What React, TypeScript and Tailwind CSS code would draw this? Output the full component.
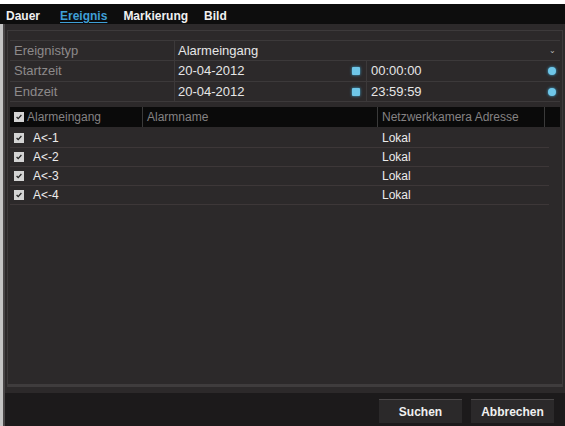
import React from 'react';

const CheckBox = () => (
  <span className="w-[10px] h-[10px] bg-[#d4d4d4] flex items-center justify-center shrink-0">
    <svg viewBox="0 0 10 10" className="w-[8px] h-[8px]">
      <path d="M2 5 L4 7 L8 2.5" stroke="#222" strokeWidth="1.6" fill="none" />
    </svg>
  </span>
);

const BlueDot = ({ round }: { round?: boolean }) => (
  <span
    className={`w-[8px] h-[8px] bg-[#6fc6e8] shadow-[0_0_3px_#3fa9d6] ${round ? 'rounded-full' : 'rounded-[1px]'}`}
  />
);

const App = () => {
  const tabs = [
    { name: 'Dauer', cls: 'ml-[6px]' },
    { name: 'Ereignis', cls: 'ml-[20px]' },
    { name: 'Markierung', cls: 'ml-[16px]' },
    { name: 'Bild', cls: 'ml-[16px]' },
  ];
  const alarms = ['A<-1', 'A<-2', 'A<-3', 'A<-4'];

  return (
    <div
      className="w-[565px] h-[426px] bg-white pt-[4px] flex flex-col text-[13px] overflow-hidden"
      style={{ fontFamily: '"Liberation Sans", Arial, sans-serif' }}
    >
      {/* Tabs */}
      <div className="h-[20px] bg-[#0d0d0d] flex items-center pt-[3px] shrink-0 text-[12px] font-bold">
        {tabs.map((t) => (
          <span
            key={t.name}
            className={`${t.cls} ${
              t.name === 'Ereignis'
                ? 'text-[#3f9fd6] underline underline-offset-2'
                : 'text-[#f0f0f0]'
            }`}
          >
            {t.name}
          </span>
        ))}
      </div>

      <div className="flex flex-1 min-h-0">
        <div className="w-[3px] bg-[#c4c4c4] shrink-0" />
        <div className="w-[2px] bg-[#4a4748] shrink-0" />
        <div className="flex-1 flex flex-col bg-[#2c292a]">
          {/* Panel */}
          <div className="flex-1 mt-[6px] mx-[2px] mb-[6px] border border-[#3d3a3b] border-b-[3px] border-b-[#3f3c3d] flex flex-col pt-[9px] px-[2px]">
            {/* Form */}
            <div className="flex flex-col text-[#8d8a8b]">
              <div className="flex h-[21px] border-t border-b border-[#3c393a]">
                <div className="w-[165px] pl-[4px] flex items-center border-r border-[#3c393a]">Ereignistyp</div>
                <div className="flex-1 pl-[3px] pr-[4px] flex items-center justify-between text-[#e6e6e6]">
                  <span>Alarmeingang</span>
                  <span className="text-[#bbb] text-[8px]">⌄</span>
                </div>
              </div>
              <div className="flex h-[21px] border-b border-[#3c393a]">
                <div className="w-[165px] pl-[4px] flex items-center border-r border-[#3c393a]">Startzeit</div>
                <div className="w-[192px] pl-[3px] pr-[6px] flex items-center justify-between text-[#e6e6e6] border-r border-[#3c393a]">
                  <span>20-04-2012</span>
                  <BlueDot />
                </div>
                <div className="flex-1 pl-[4px] pr-[4px] flex items-center justify-between text-[#e6e6e6]">
                  <span>00:00:00</span>
                  <BlueDot round />
                </div>
              </div>
              <div className="flex h-[20px] border-b border-[#3c393a]">
                <div className="w-[165px] pl-[4px] flex items-center border-r border-[#3c393a]">Endzeit</div>
                <div className="w-[192px] pl-[3px] pr-[6px] flex items-center justify-between text-[#e6e6e6] border-r border-[#3c393a]">
                  <span>20-04-2012</span>
                  <BlueDot />
                </div>
                <div className="flex-1 pl-[4px] pr-[4px] flex items-center justify-between text-[#e6e6e6]">
                  <span>23:59:59</span>
                  <BlueDot round />
                </div>
              </div>
            </div>

            {/* Table */}
            <div className="mt-[5px] flex flex-col text-[12px]">
              <div className="flex h-[20px] bg-[#0a0a0a] text-[#858283]">
                <div className="w-[133px] pl-[4px] flex items-center gap-[3px] border-r border-[#3a3a3a]">
                  <CheckBox />
                  <span>Alarmeingang</span>
                </div>
                <div className="w-[235px] pl-[4px] flex items-center border-r border-[#3a3a3a]">Alarmname</div>
                <div className="w-[167px] pl-[4px] flex items-center border-r border-[#3a3a3a]">Netzwerkkamera Adresse</div>
                <div className="flex-1" />
              </div>
              <div className="flex flex-col mt-[2px] mr-[11px]">
                {alarms.map((a) => (
                  <div key={a} className="flex h-[19px] border-b border-[#3d3738] text-[#ececec]">
                    <div className="w-[133px] pl-[4px] flex items-center gap-[9px]">
                      <CheckBox />
                      <span>{a}</span>
                    </div>
                    <div className="w-[235px]" />
                    <div className="flex-1 pl-[4px] flex items-center">Lokal</div>
                  </div>
                ))}
              </div>
            </div>
          </div>

          {/* Footer */}
          <div className="h-[33px] bg-[#1c1a1b] flex items-end pb-[3px] justify-end gap-[9px] pr-[11px] shrink-0">
            <button className="w-[83px] h-[24px] bg-[#2b292a] border-t border-[#4a4748] text-[#f0f0f0] text-[12px] font-bold">
              Suchen
            </button>
            <button className="w-[83px] h-[24px] bg-[#2b292a] border-t border-[#4a4748] text-[#f0f0f0] text-[12px] font-bold">
              Abbrechen
            </button>
          </div>
        </div>
      </div>
    </div>
  );
};

export default App;
